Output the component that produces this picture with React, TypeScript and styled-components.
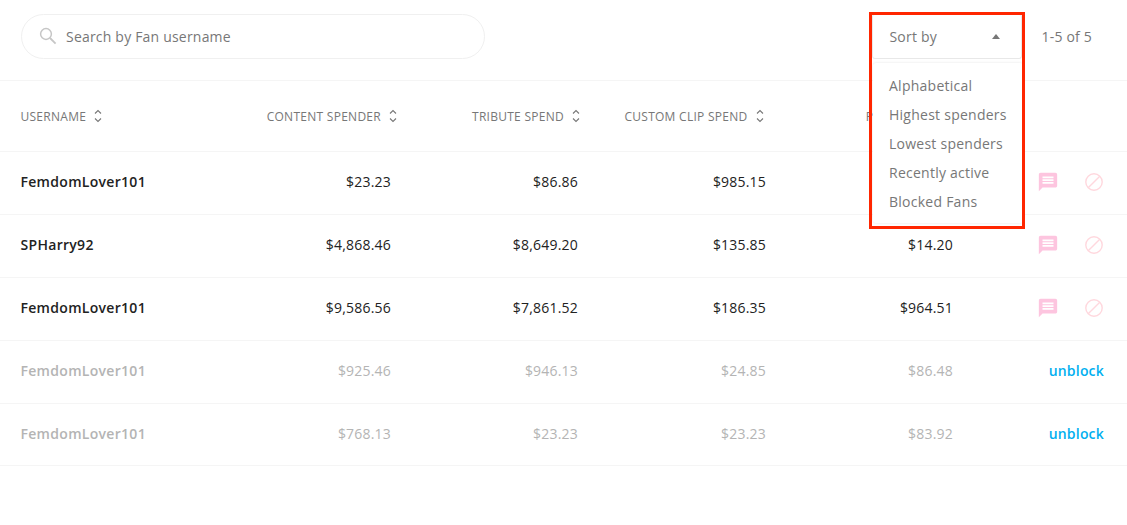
import { createGlobalStyle, styled } from "styled-components"

const GlobalStyle = createGlobalStyle`
  html, body {
    margin: 0;
    padding: 0;
    background: #fff;
    font-family: "Open Sans", "Liberation Sans", sans-serif;
    color: #222;
  }
`

const Page = styled.div`
  position: relative;
  width: 1127px;
  height: 525px;
  overflow: hidden;
  background: #fff;
`

const Toolbar = styled.div`
  display: flex;
  align-items: center;
  height: 81px;
  box-sizing: border-box;
  padding: 0 35px 8px 21px;
  border-bottom: 1px solid #f5f5f5;
`

const SearchBox = styled.div`
  display: flex;
  align-items: center;
  gap: 9px;
  width: 464px;
  height: 45px;
  box-sizing: border-box;
  padding-left: 17px;
  border: 1px solid #f0f0f0;
  border-radius: 23px;
`

const Placeholder = styled.span`
  font-size: 14px;
  letter-spacing: 0.2px;
  color: #777;
`

const SortButton = styled.div`
  display: flex;
  align-items: center;
  justify-content: space-between;
  width: 150px;
  height: 45px;
  box-sizing: border-box;
  margin-left: auto;
  padding: 0 21px 0 16px;
  border: 1px solid #e8e8e8;
  border-top-color: #f0f0f0;
  border-radius: 3px;
  font-size: 14px;
  letter-spacing: 0.2px;
  color: #777;
`

const Caret = styled.span`
  width: 0;
  height: 0;
  border-left: 4px solid transparent;
  border-right: 4px solid transparent;
  border-bottom: 5px solid #777;
`

const Pager = styled.span`
  margin-left: 19px;
  font-size: 14px;
  letter-spacing: 0.2px;
  color: #777;
`

const Row = styled.div<{ $head?: boolean; $last?: boolean }>`
  display: grid;
  grid-template-columns: 183.5px 187px 187px 188px 187px 1fr;
  align-items: center;
  height: ${(p) => (p.$head ? "71px" : p.$last ? "62px" : "63px")};
  box-sizing: border-box;
  padding: 0 23px ${(p) => (p.$head ? "0" : p.$last ? "2px" : "3px")} 20.5px;
  border-bottom: 1px solid #f5f5f5;
`

const HeadCell = styled.div<{ $shift?: number; $left?: boolean }>`
  display: flex;
  align-items: center;
  justify-content: ${(p) => (p.$left ? "flex-start" : "flex-end")};
  gap: 8px;
  margin-right: ${(p) => -(p.$shift ?? 0)}px;
  font-size: 12px;
  letter-spacing: 0.27px;
  color: #777;
  text-transform: uppercase;
  white-space: nowrap;
`

const Name = styled.div<{ $blocked?: boolean }>`
  font-size: 14px;
  font-weight: 600;
  letter-spacing: 0.3px;
  color: ${(p) => (p.$blocked ? "#b4b4b4" : "#222")};
`

const Amount = styled.div<{ $blocked?: boolean }>`
  font-size: 14px;
  letter-spacing: 0.2px;
  text-align: right;
  color: ${(p) => (p.$blocked ? "#b4b4b4" : "#222")};
`

const Actions = styled.div`
  display: flex;
  align-items: center;
  justify-content: flex-end;
  gap: 25px;
`

const Unblock = styled.span`
  font-size: 14px;
  font-weight: 600;
  letter-spacing: 0.2px;
  color: #00aff0;
`

const Menu = styled.div`
  position: absolute;
  top: 63px;
  left: 873px;
  width: 150px;
  height: 160px;
  box-sizing: border-box;
  padding: 9px 0 0 16px;
  background: #fff;
  border-radius: 3px;
  box-shadow: 0 0 3px rgba(0, 0, 0, 0.1);
`

const MenuItem = styled.div`
  height: 29px;
  line-height: 27px;
  font-size: 14px;
  letter-spacing: 0.25px;
  color: #777;
  white-space: nowrap;
`

const Highlight = styled.div`
  position: absolute;
  top: 12px;
  left: 869px;
  width: 156px;
  height: 217px;
  box-sizing: border-box;
  border: 3px solid #ff2600;
  pointer-events: none;
`

const SearchIcon = () => (
  <svg width="18" height="18" viewBox="0 0 18 18" fill="none" stroke="#c6c6c6">
    <circle cx="7" cy="7" r="5.4" strokeWidth="1.5" />
    <path d="M11 11l5.6 5.6" strokeWidth="1.8" />
  </svg>
)

const SortIcon = () => (
  <svg width="8" height="14" viewBox="0 0 8 14" fill="none" stroke="#777" strokeWidth="1.1">
    <path d="M1 4.5 4 1.5 7 4.5" />
    <path d="M1 9.5 4 12.5 7 9.5" />
  </svg>
)

const MessageIcon = () => (
  <svg width="22" height="22" viewBox="0 0 24 24" fill="#fdc5df">
    <path d="M20 2H4c-1.1 0-1.99.9-1.99 2L2 22l4-4h14c1.1 0 2-.9 2-2V4c0-1.1-.9-2-2-2zM18 14H6v-2h12v2zm0-3H6V9h12v2zm0-3H6V6h12v2z" />
  </svg>
)

const BlockIcon = () => (
  <svg width="20" height="20" viewBox="0 0 20 20" fill="none" stroke="#ffd8de" strokeWidth="1.4">
    <circle cx="10" cy="10" r="8.2" />
    <path d="M4.2 15.8 15.8 4.2" />
  </svg>
)

const headers = [
  { label: "Content spender", shift: 6 },
  { label: "Tribute spend", shift: 2 },
  { label: "Custom clip spend", shift: -2.5 },
  { label: "PPV spend", shift: -6 },
]

const rows = [
  { name: "FemdomLover101", values: ["$23.23", "$86.86", "$985.15", "$64.51"], blocked: false },
  { name: "SPHarry92", values: ["$4,868.46", "$8,649.20", "$135.85", "$14.20"], blocked: false },
  { name: "FemdomLover101", values: ["$9,586.56", "$7,861.52", "$186.35", "$964.51"], blocked: false },
  { name: "FemdomLover101", values: ["$925.46", "$946.13", "$24.85", "$86.48"], blocked: true },
  { name: "FemdomLover101", values: ["$768.13", "$23.23", "$23.23", "$83.92"], blocked: true },
]

const sortOptions = ["Alphabetical", "Highest spenders", "Lowest spenders", "Recently active", "Blocked Fans"]

export default function App() {
  return (
    <Page>
      <GlobalStyle />
      <Toolbar>
        <SearchBox>
          <SearchIcon />
          <Placeholder>Search by Fan username</Placeholder>
        </SearchBox>
        <SortButton>
          Sort by
          <Caret />
        </SortButton>
        <Pager>1-5 of 5</Pager>
      </Toolbar>

      <Row $head>
        <HeadCell $left>
          Username
          <SortIcon />
        </HeadCell>
        {headers.map((h) => (
          <HeadCell key={h.label} $shift={h.shift}>
            {h.label}
            <SortIcon />
          </HeadCell>
        ))}
      </Row>

      {rows.map((row, i) => (
        <Row key={i} $last={i === rows.length - 1}>
          <Name $blocked={row.blocked}>{row.name}</Name>
          {row.values.map((v, j) => (
            <Amount key={j} $blocked={row.blocked}>
              {v}
            </Amount>
          ))}
          <Actions>
            {row.blocked ? (
              <Unblock>unblock</Unblock>
            ) : (
              <>
                <MessageIcon />
                <BlockIcon />
              </>
            )}
          </Actions>
        </Row>
      ))}

      <Menu>
        {sortOptions.map((o) => (
          <MenuItem key={o}>{o}</MenuItem>
        ))}
      </Menu>
      <Highlight />
    </Page>
  )
}
